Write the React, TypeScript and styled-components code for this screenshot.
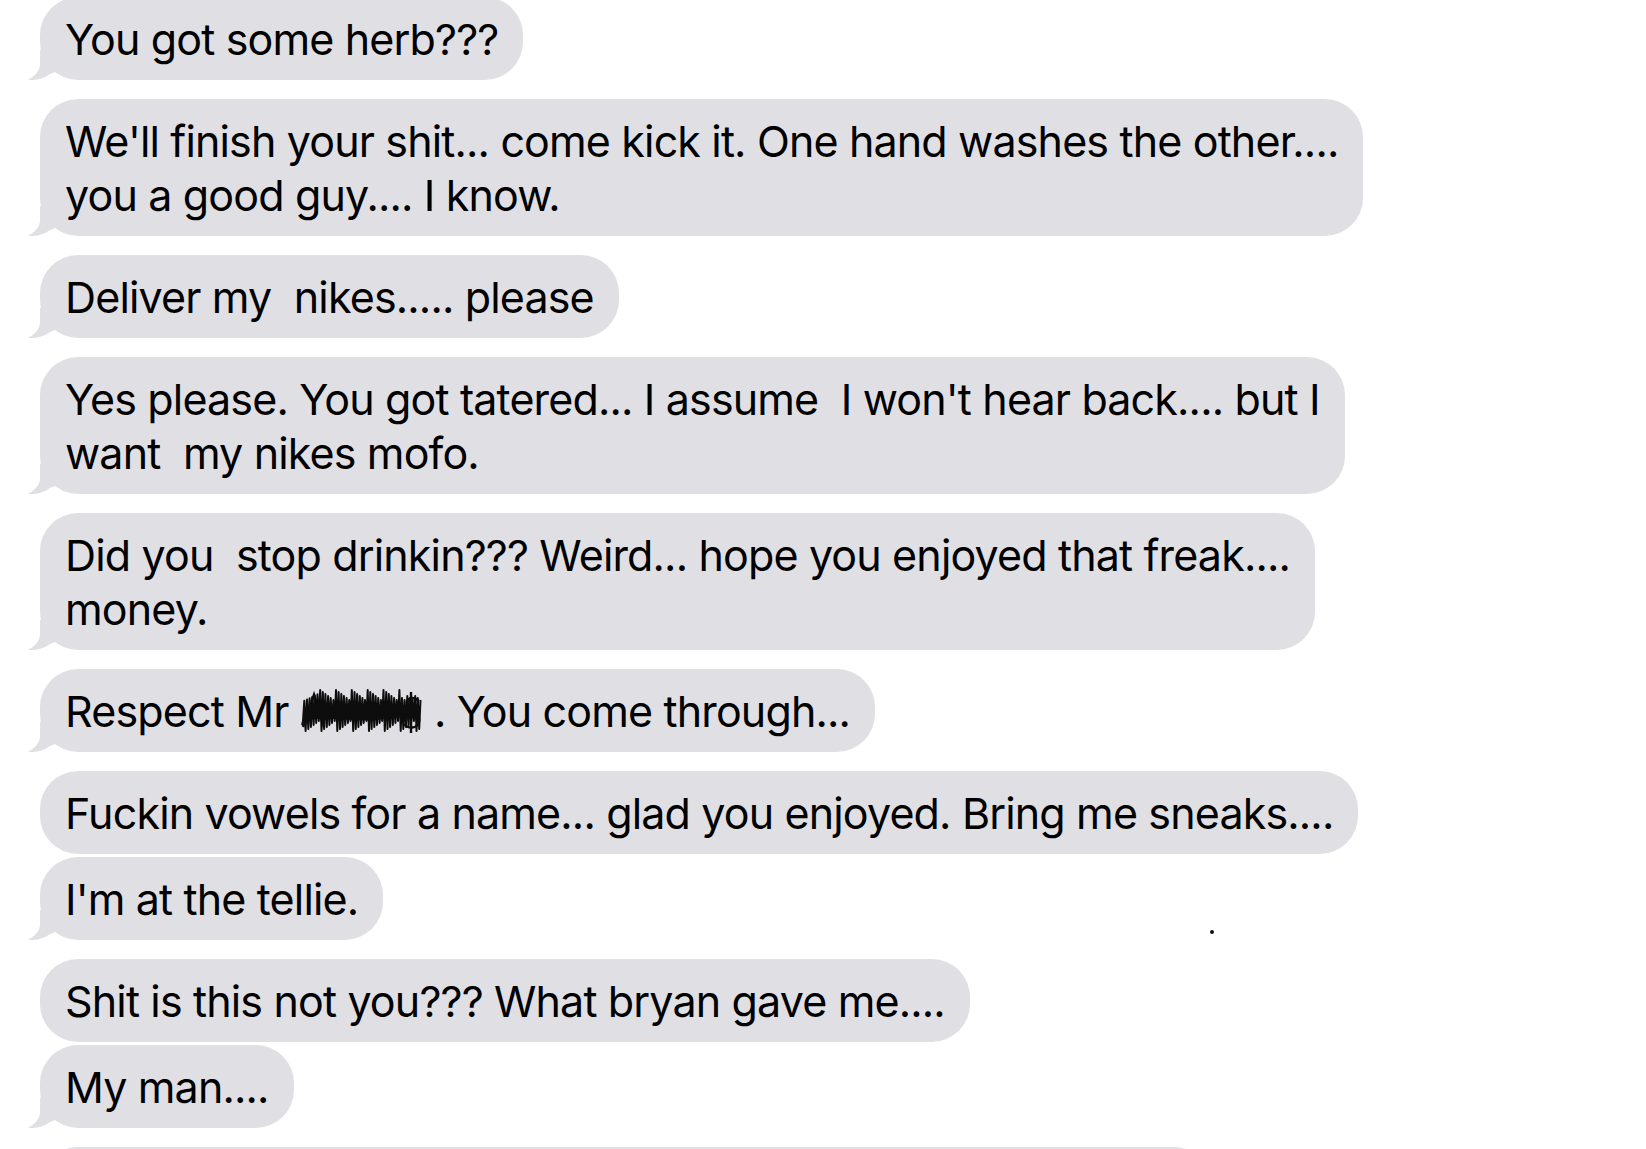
import React from "react";
import styled, { createGlobalStyle } from "styled-components";

interface Message {
  id: number;
  text: React.ReactNode;
  tail?: boolean;
}

interface BubbleProps {
  $tail?: boolean;
  $width?: number;
}

const GlobalStyle = createGlobalStyle`
  html, body {
    margin: 0;
    padding: 0;
    background: #fff;
    overflow: hidden;
  }
`;

// names are scribbled out in the screenshot, so draw a messy scribble
const Scribble = () => {
  let d = "M2 38";
  for (let i = 0; i < 90; i++) {
    const x = 3 + i * 1.32;
    const top = x < 20 ? 16 - x * 0.5 : x > 100 ? 8 + ((i * 7) % 6) : 2 + ((i * 37) % 12);
    const bottom = 34 + ((i * 53) % 12);
    d += ` L${x.toFixed(1)} ${i % 2 ? top : bottom}`;
  }
  return (
    <ScribbleSvg width="123" height="48" viewBox="0 0 123 48">
      <path d={d} fill="none" stroke="#0d0d0d" strokeWidth="2" strokeLinejoin="round" />
      <path d="M3 40 L14 8 L24 40 M8 30 L21 30" fill="none" stroke="#0d0d0d" strokeWidth="2.6" />
      <path d="M119 14 C112 8 104 12 108 21 C112 27 121 27 119 35 C117 42 108 42 104 37 M111 5 L111 46" fill="none" stroke="#0d0d0d" strokeWidth="2.4" />
      <path d="M6 31 C30 26 60 36 90 29 C100 27 110 31 120 29" fill="none" stroke="#0d0d0d" strokeWidth="3.4" />
      <path d="M30 24 C50 20 70 26 98 22" fill="none" stroke="#0d0d0d" strokeWidth="3" />
    </ScribbleSvg>
  );
};

const Tail = () => (
  <TailSvg width="34" height="30" viewBox="0 0 34 30">
    <path d="M12 0 L12 14 C12 21 7 26 0 30 C8 30.5 16 28.5 22 24 L27 22 L27 0 Z" fill="#e0e0e4" />
  </TailSvg>
);

const messages: Message[] = [
  { id: 1, text: "You got some herb???", tail: true },
  {
    id: 2,
    text: "We'll finish your shit... come kick it. One hand washes the other....\nyou a good guy.... I know.",
    tail: true,
  },
  { id: 3, text: "Deliver my  nikes..... please", tail: true },
  {
    id: 4,
    text: "Yes please. You got tatered... I assume  I won't hear back.... but I\nwant  my nikes mofo.",
    tail: true,
  },
  {
    id: 5,
    text: "Did you  stop drinkin??? Weird... hope you enjoyed that freak....\nmoney.",
    tail: true,
  },
  {
    id: 6,
    text: (
      <>
        Respect Mr <Scribble /> . You come through...
      </>
    ),
    tail: true,
  },
  { id: 7, text: "Fuckin vowels for a name... glad you enjoyed. Bring me sneaks...." },
  { id: 8, text: "I'm at the tellie.", tail: true },
  { id: 9, text: "Shit is this not you??? What bryan gave me...." },
  { id: 10, text: "My man....", tail: true },
];

const App = () => {
  return (
    <Page>
      <GlobalStyle />
      <Thread>
        {messages.map((m) => (
          <Bubble key={m.id} $tail={m.tail}>
            {m.text}
            {m.tail && <Tail />}
          </Bubble>
        ))}
        <Bubble $width={1172} $tail>
          {"\u00a0"}
        </Bubble>
      </Thread>
      <Speck />
    </Page>
  );
};

const Page = styled.div`
  position: relative;
  width: 1646px;
  height: 1149px;
  overflow: hidden;
  background: #fff;
`;

const Thread = styled.div`
  display: flex;
  flex-direction: column;
  align-items: flex-start;
  padding-left: 40px;
  margin-top: -3px;
`;

const Bubble = styled.div<BubbleProps>`
  position: relative;
  box-sizing: border-box;
  width: ${(p) => (p.$width ? `${p.$width}px` : "fit-content")};
  padding: 14.5px 25px;
  margin-bottom: ${(p) => (p.$tail ? "19px" : "3px")};
  background: #e0e0e4;
  border-radius: 38px;
  color: #000;
  font-family: "Inter", "Noto Sans", sans-serif;
  font-size: 43px;
  line-height: 54px;
  letter-spacing: -0.85px;
  white-space: pre-wrap;
`;

const TailSvg = styled.svg`
  position: absolute;
  left: -12px;
  bottom: 0;
`;

const ScribbleSvg = styled.svg`
  display: inline-block;
  vertical-align: middle;
  margin-top: -8px;
`;

const Speck = styled.div`
  position: absolute;
  left: 1210px;
  top: 930px;
  width: 4px;
  height: 4px;
  border-radius: 50%;
  background: #111;
`;

export default App;
